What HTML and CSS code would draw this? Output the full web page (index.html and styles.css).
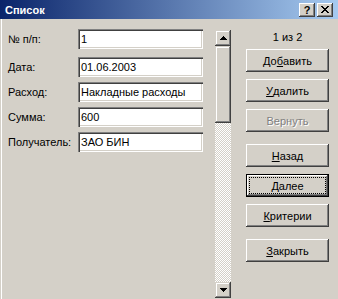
FILE: index.html
```html
<!DOCTYPE html>
<html lang="ru">
<head>
  <meta charset="UTF-8">
  <meta name="viewport" content="width=device-width, initial-scale=1.0">
  <title>Список</title>
  <link rel="stylesheet" href="styles.css">
</head>
<body>
  <div class="window">
    <div class="titlebar">
      <span class="title">Список</span>
      <div class="caption-btns">
        <button class="cap-btn help">?</button>
        <button class="cap-btn">
          <svg width="8" height="7" viewBox="0 0 8 7">
            <path d="M0 0h2v1h-2z M6 0h2v1h-2z M1 1h2v1h-2z M5 1h2v1h-2z M2 2h4v1h-4z M3 3h2v1h-2z M2 4h4v1h-4z M1 5h2v1h-2z M5 5h2v1h-2z M0 6h2v1h-2z M6 6h2v1h-2z" fill="#000"/>
          </svg>
        </button>
      </div>
    </div>

    <div class="client">
      <div class="fields">
        <div class="field-row first"><label>№ п/п:</label><div class="edit">1</div></div>
        <div class="field-row"><label>Дата:</label><div class="edit">01.06.2003</div></div>
        <div class="field-row"><label>Расход:</label><div class="edit">Накладные расходы</div></div>
        <div class="field-row"><label>Сумма:</label><div class="edit">600</div></div>
        <div class="field-row"><label>Получатель:</label><div class="edit">ЗАО БИН</div></div>
      </div>

      <div class="scrollbar">
        <div class="sb-btn">
          <svg width="7" height="4" viewBox="0 0 7 4"><path d="M3 0h1v1h-1z M2 1h3v1h-3z M1 2h5v1h-5z M0 3h7v1h-7z" fill="#000"/></svg>
        </div>
        <div class="sb-thumb"></div>
        <div class="sb-track"></div>
        <div class="sb-btn">
          <svg width="7" height="4" viewBox="0 0 7 4"><path d="M0 0h7v1h-7z M1 1h5v1h-5z M2 2h3v1h-3z M3 3h1v1h-1z" fill="#000"/></svg>
        </div>
      </div>

      <div class="commands">
        <div class="counter">1 из 2</div>
        <button class="btn">До<u>б</u>авить</button>
        <button class="btn"><u>У</u>далить</button>
        <button class="btn disabled">Вернуть</button>
        <button class="btn group"><u>Н</u>азад</button>
        <button class="btn default"><span class="focus"><u>Д</u>алее</span></button>
        <button class="btn"><u>К</u>ритерии</button>
        <button class="btn group"><u>З</u>акрыть</button>
      </div>
    </div>
  </div>
</body>
</html>
```

FILE: styles.css
```css
body {
  margin: 0;
  background-color: #d4d0c8;
  font-family: "Liberation Sans", Arial, sans-serif;
  font-size: 11px;
  color: #000;
}

.window {
  width: 338px;
  height: 299px;
  display: flex;
  flex-direction: column;
  background-color: #d4d0c8;
  overflow: hidden;
}

/* title bar */
.titlebar {
  height: 19px;
  flex: none;
  display: flex;
  align-items: center;
  justify-content: space-between;
  padding: 0 5px;
  background: linear-gradient(to right, #0a246a, #a6caf0);
  color: #fff;
}

.title {
  font-weight: bold;
  font-size: 11px;
}

.caption-btns {
  display: flex;
  gap: 2px;
}

.cap-btn {
  width: 16px;
  height: 14px;
  padding: 0;
  border: none;
  display: flex;
  align-items: center;
  justify-content: center;
  background-color: #d4d0c8;
  font: bold 11px "Liberation Sans", Arial, sans-serif;
  color: #000;
  box-shadow: inset -1px -1px #404040, inset 1px 1px #fff, inset -2px -2px #808080, inset 2px 2px #d4d0c8;
}

/* client area */
.client {
  flex: 1;
  display: flex;
  align-items: flex-start;
  padding-left: 8px;
  box-shadow: inset 1px 0 #d4d0c8, inset 2px 0 #fff;
}

.fields {
  width: 195px;
  margin-top: 10px;
  display: flex;
  flex-direction: column;
  gap: 5px;
}

.field-row {
  display: flex;
  align-items: center;
  height: 20px;
}

.field-row.first {
  margin-bottom: 3px;
}

.field-row label {
  width: 70px;
}

.edit {
  width: 125px;
  height: 20px;
  box-sizing: border-box;
  padding: 0 3px;
  line-height: 20px;
  background-color: #fff;
  white-space: nowrap;
  box-shadow: inset 1px 1px #808080, inset 2px 2px #404040, inset -1px -1px #fff, inset -2px -2px #d4d0c8;
}

/* scrollbar */
.scrollbar {
  width: 16px;
  height: 268px;
  margin-left: 12px;
  margin-top: 11px;
  display: flex;
  flex-direction: column;
  background: repeating-conic-gradient(#fff 0 25%, #d4d0c8 0 50%) 0 0 / 2px 2px;
}

.sb-btn,
.sb-thumb {
  background-color: #d4d0c8;
  box-shadow: inset -1px -1px #404040, inset 1px 1px #d4d0c8, inset -2px -2px #808080, inset 2px 2px #fff;
}

.sb-btn {
  height: 16px;
  flex: none;
  display: flex;
  align-items: center;
  justify-content: center;
}

.sb-thumb {
  height: 77px;
  flex: none;
}

.sb-track {
  flex: 1;
}

/* command buttons */
.commands {
  width: 83px;
  margin-left: 15px;
  margin-top: 11px;
  display: flex;
  flex-direction: column;
}

.counter {
  height: 14px;
  line-height: 14px;
  margin-bottom: 5px;
  text-align: center;
}

.btn {
  height: 23px;
  margin-bottom: 7px;
  padding: 0;
  border: none;
  display: flex;
  align-items: center;
  justify-content: center;
  background-color: #d4d0c8;
  font: 11px "Liberation Sans", Arial, sans-serif;
  color: #000;
  box-shadow: inset -1px -1px #404040, inset 1px 1px #fff, inset -2px -2px #808080, inset 2px 2px #d4d0c8;
}

.btn.group {
  margin-top: 5px;
}

.btn.disabled {
  color: #808080;
  text-shadow: 1px 1px 0 #fff;
}

.btn.default {
  padding: 3px;
  box-sizing: border-box;
  box-shadow: inset 0 0 0 1px #000, inset -2px -2px #404040, inset 2px 2px #fff, inset -3px -3px #808080;
}

.focus {
  flex: 1;
  align-self: stretch;
  display: flex;
  align-items: center;
  justify-content: center;
  border: 1px dotted #000;
}
```
